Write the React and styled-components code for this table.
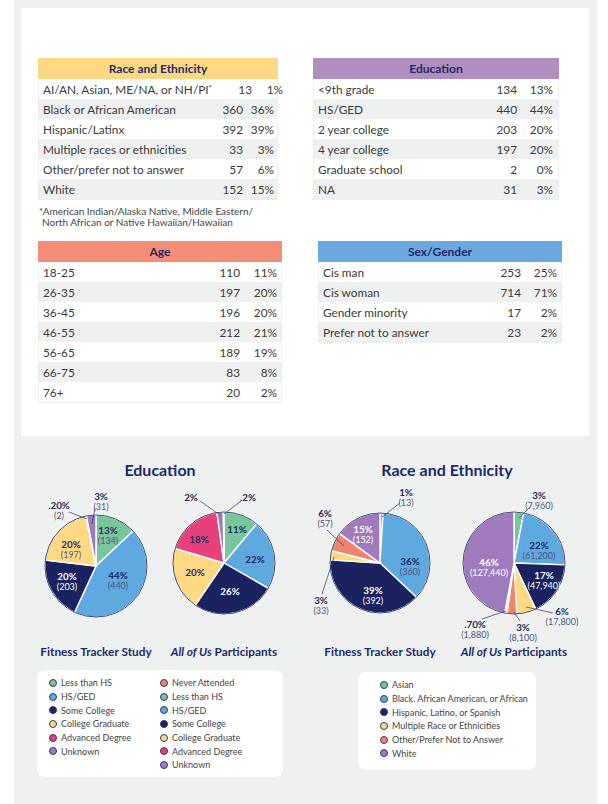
import React from "react";
import styled, { createGlobalStyle } from "styled-components";

const GlobalStyle = createGlobalStyle`
  body {
    margin: 0;
    background: #fff;
    font-family: "Lato", "Liberation Sans", sans-serif;
  }
`;

const colors = {
  green: "#78c69b",
  blue: "#5ea9df",
  navy: "#1a2260",
  yellow: "#fdd984",
  pink: "#e8407a",
  purple: "#9f7bbd",
  salmon: "#f2846c",
  sliver: "#e6e6e6",
};

const Panel = styled.div`
  box-sizing: border-box;
  width: 583px;
  min-height: 804px;
  margin-left: 14px;
  padding-top: 8px;
  background: #eff1f1;
`;

const Card = styled.section`
  background: #fff;
  margin: 0 8px 0 7px;
  padding: 50px 0 33px 17px;
`;

const TopGrid = styled.div`
  display: grid;
  grid-template-columns: 243px 248px;
  column-gap: 32px;
  row-gap: 13px;
  align-items: start;
`;

const Table = styled.div`
  width: ${(p) => p.$w}px;
  margin-left: ${(p) => p.$ml || 0}px;
`;

const Head = styled.div`
  background: ${(p) => p.$bg};
  height: 21px;
  line-height: 21px;
  text-align: center;
  font-size: 12px;
  font-weight: 700;
  color: #1e2a6a;
`;

const Body = styled.div`
  border: 1px solid #eeeeee;
  border-top: 0;
`;

const Row = styled.div`
  display: grid;
  grid-template-columns: 1fr 40px ${(p) => p.$pct}px;
  align-items: center;
  height: 20px;
  padding: 0 ${(p) => p.$pr}px 0 4px;
  background: ${(p) => (p.$alt ? "#eff0f0" : "#fff")};
  font-size: 11.8px;
  color: #3a3a3a;
  white-space: nowrap;
`;

const Num = styled.span`
  text-align: right;
`;

const Star = styled.span`
  font-size: 8px;
  vertical-align: 3px;
`;

const Footnote = styled.p`
  margin: 6px 0 0 1px;
  font-size: 10px;
  line-height: 11px;
  color: #444;
  span {
    display: block;
    padding-left: 3px;
  }
`;

const ChartsGrid = styled.div`
  display: grid;
  grid-template-columns: 260px 268px;
  column-gap: 23px;
  padding: 25px 0 0 16px;
`;

const ChartCol = styled.div`
  display: flex;
  flex-direction: column;
  align-items: center;
`;

const ChartTitle = styled.h2`
  margin: 0;
  font-size: 16px;
  line-height: 18px;
  font-weight: 700;
  color: #1b2a68;
`;

const PieRow = styled.div`
  display: flex;
  margin-top: 8px;
`;

const PieCell = styled.figure`
  margin: 0;
  width: ${(p) => p.$w}px;
  display: flex;
  flex-direction: column;
  align-items: center;
`;

const Caption = styled.figcaption`
  margin-top: 3px;
  font-size: 11.8px;
  line-height: 12px;
  font-weight: 700;
  color: #1b2a68;
  white-space: nowrap;
`;

const Legend = styled.div`
  display: grid;
  grid-template-columns: ${(p) => p.$cols};
  align-items: start;
  box-sizing: border-box;
  width: ${(p) => p.$w}px;
  margin-top: ${(p) => p.$mt}px;
  padding: ${(p) => p.$pad};
  background: #fff;
  border-radius: 8px;
`;

const LegendItem = styled.div`
  display: flex;
  align-items: center;
  gap: 4px;
  height: 13.7px;
  font-size: 9px;
  color: #444;
  white-space: nowrap;
`;

const Dot = styled.span`
  box-sizing: border-box;
  width: 8px;
  height: 8px;
  border-radius: 50%;
  background: ${(p) => p.$c};
  border: 1px solid #33386a;
  flex: none;
`;

const raceRows = [
  ["AI/AN, Asian, ME/NA, or NH/PI", "13", "1%", true],
  ["Black or African American", "360", "36%"],
  ["Hispanic/Latinx", "392", "39%"],
  ["Multiple races or ethnicities", "33", "3%"],
  ["Other/prefer not to answer", "57", "6%"],
  ["White", "152", "15%"],
];

const eduRows = [
  ["<9th grade", "134", "13%"],
  ["HS/GED", "440", "44%"],
  ["2 year college", "203", "20%"],
  ["4 year college", "197", "20%"],
  ["Graduate school", "2", "0%"],
  ["NA", "31", "3%"],
];

const ageRows = [
  ["18-25", "110", "11%"],
  ["26-35", "197", "20%"],
  ["36-45", "196", "20%"],
  ["46-55", "212", "21%"],
  ["56-65", "189", "19%"],
  ["66-75", "83", "8%"],
  ["76+", "20", "2%"],
];

const sexRows = [
  ["Cis man", "253", "25%"],
  ["Cis woman", "714", "71%"],
  ["Gender minority", "17", "2%"],
  ["Prefer not to answer", "23", "2%"],
];

const DataTable = ({ title, bg, rows, w, ml, pct, pr }) => (
  <Table $w={w} $ml={ml}>
    <Head $bg={bg}>{title}</Head>
    <Body>
      {rows.map(([label, n, p, star], i) => (
        <Row key={label} $alt={i % 2 === 1} $pct={pct} $pr={pr}>
          <span>
            {label}
            {star && <Star>*</Star>}
          </span>
          <Num>{n}</Num>
          <Num>{p}</Num>
        </Row>
      ))}
    </Body>
  </Table>
);

const pt = (r, a) => [r * Math.sin((a * Math.PI) / 180), -r * Math.cos((a * Math.PI) / 180)];

const slicePath = (r, a0, a1) => {
  const [x0, y0] = pt(r, a0);
  const [x1, y1] = pt(r, a1);
  const large = a1 - a0 > 180 ? 1 : 0;
  return `M0 0 L${x0} ${y0} A${r} ${r} 0 ${large} 1 ${x1} ${y1} Z`;
};

const Pie = ({ w, dy, r, slices, labels }) => {
  const total = slices.reduce((s, x) => s + x.v, 0);
  let acc = 0;
  return (
    <svg width={w} height="156" viewBox={`${-w / 2} -76 ${w} 156`}>
      <g transform={`translate(0 ${dy})`}>
        {slices.map((s, i) => {
          const a0 = (acc / total) * 360;
          acc += s.v;
          const a1 = (acc / total) * 360;
          return (
            <path key={i} d={slicePath(r, a0, a1)} fill={s.c} stroke="#fff" strokeWidth="1.4" strokeLinejoin="round" />
          );
        })}
        <circle r={r} fill="none" stroke="#2f3366" strokeWidth="0.9" />
        {labels.map((l, i) => (
          <g key={i} textAnchor="middle" dominantBaseline="central">
            {l.line && (
              <line x1={l.line[0]} y1={l.line[1]} x2={l.line[2]} y2={l.line[3]} stroke="#2f3366" strokeWidth="0.7" />
            )}
            <text x={l.x} y={l.y} fontSize="9.8" fontWeight="700" fill={l.light ? "#fff" : "#1f2a60"}>
              {l.p}
            </text>
            {l.n && (
              <text x={l.x} y={l.y + 10} fontSize="9" fill={l.light ? "#fff" : "#50567a"}>
                {l.n}
              </text>
            )}
          </g>
        ))}
      </g>
    </svg>
  );
};

const ftsEdu = {
  dy: 3,
  r: 51,
  slices: [
    { v: 13, c: colors.green },
    { v: 44, c: colors.blue },
    { v: 20, c: colors.navy },
    { v: 20, c: colors.yellow },
    { v: 0.2, c: colors.pink },
    { v: 3, c: colors.purple },
  ],
  labels: [
    { x: 12, y: -36, p: "13%", n: "(134)" },
    { x: 22, y: 9, p: "44%", n: "(440)" },
    { x: -29, y: 10, p: "20%", n: "(203)", light: true },
    { x: -25, y: -22, p: "20%", n: "(197)" },
    { x: -37, y: -61, p: ".20%", n: "(2)", line: [-27, -54, -9, -47] },
    { x: 5, y: -70, p: "3%", n: "(31)", line: [-1, -58, -4, -42] },
  ],
};

const aouEdu = {
  dy: 0,
  r: 51,
  slices: [
    { v: 11, c: colors.green },
    { v: 22, c: colors.blue },
    { v: 26, c: colors.navy },
    { v: 20, c: colors.yellow },
    { v: 18, c: colors.pink },
    { v: 2, c: colors.purple },
    { v: 0.2, c: colors.salmon },
  ],
  labels: [
    { x: 13, y: -34, p: "11%" },
    { x: 31, y: -4, p: "22%" },
    { x: 6, y: 28, p: "26%", light: true },
    { x: -29, y: 9, p: "20%" },
    { x: -25, y: -24, p: "18%" },
    { x: -33, y: -66, p: "2%", line: [-24, -62, -4, -48] },
    { x: 24, y: -66, p: ".2%", line: [17, -62, 0, -49] },
  ],
};

const ftsRace = {
  dy: 0,
  r: 50,
  slices: [
    { v: 1, c: colors.green },
    { v: 36, c: colors.blue },
    { v: 39, c: colors.navy },
    { v: 3, c: colors.yellow },
    { v: 6, c: colors.salmon },
    { v: 15, c: colors.purple },
  ],
  labels: [
    { x: 26, y: -71, p: "1%", n: "(13)", line: [20, -60, 2, -46] },
    { x: 30, y: -2, p: "36%", n: "(360)" },
    { x: -7, y: 27, p: "39%", n: "(392)", light: true },
    { x: -17, y: -34, p: "15%", n: "(152)", light: true },
    { x: -55, y: -50, p: "6%", n: "(57)", line: [-53, -33, -36, -17] },
    { x: -59, y: 37, p: "3%", n: "(33)", line: [-58, 31, -46, -6] },
  ],
};

const aouRace = {
  dy: 0,
  r: 51,
  slices: [
    { v: 3, c: colors.green },
    { v: 22, c: colors.blue },
    { v: 17, c: colors.navy },
    { v: 6, c: colors.yellow },
    { v: 3, c: colors.salmon },
    { v: 0.7, c: colors.sliver },
    { v: 46, c: colors.purple },
  ],
  labels: [
    { x: 25, y: -68, p: "3%", n: "(7,960)", line: [16, -56, 5, -45] },
    { x: 25, y: -18, p: "22%", n: "(61,200)" },
    { x: 30, y: 12, p: "17%", n: "(47,940)", light: true },
    { x: -25, y: -1, p: "46%", n: "(127,440)", light: true },
    { x: 48, y: 48, p: "6%", n: "(17,800)", line: [39, 50, 12, 44] },
    { x: 9, y: 64, p: "3%", n: "(8,100)", line: [6, 58, 0, 49] },
    { x: -39, y: 61, p: ".70%", n: "(1,880)", line: [-32, 56, -8, 48] },
  ],
};

const eduLegendA = [
  ["Less than HS", colors.green],
  ["HS/GED", colors.blue],
  ["Some College", colors.navy],
  ["College Graduate", colors.yellow],
  ["Advanced Degree", colors.pink],
  ["Unknown", colors.purple],
];

const eduLegendB = [["Never Attended", colors.salmon], ...eduLegendA];

const raceLegend = [
  ["Asian", colors.green],
  ["Black. African American, or African", colors.blue],
  ["Hispanic, Latino, or Spanish", colors.navy],
  ["Multiple Race or Ethnicities", colors.yellow],
  ["Other/Prefer Not to Answer", colors.salmon],
  ["White", colors.purple],
];

const LegendList = ({ items }) => (
  <div>
    {items.map(([label, c]) => (
      <LegendItem key={label}>
        <Dot $c={c} />
        {label}
      </LegendItem>
    ))}
  </div>
);

const AllOfUs = () => (
  <>
    <i>All of Us</i> Participants
  </>
);

export default function App() {
  return (
    <>
      <GlobalStyle />
      <Panel>
        <Card>
          <TopGrid>
            <div>
              <DataTable title="Race and Ethnicity" bg="#fdd882" rows={raceRows} w={240} pct={31} pr={3} />
              <Footnote>
                *American Indian/Alaska Native, Middle Eastern/
                <span>North African or Native Hawaiian/Hawaiian</span>
              </Footnote>
            </div>
            <DataTable title="Education" bg="#b08fc0" rows={eduRows} w={246} pct={36} pr={5} />
            <DataTable title="Age" bg="#f58e78" rows={ageRows} w={244} pct={37} pr={4} />
            <DataTable title="Sex/Gender" bg="#6aa8df" rows={sexRows} w={244} ml={5} pct={36} pr={4} />
          </TopGrid>
        </Card>

        <ChartsGrid>
          <ChartCol>
            <ChartTitle>Education</ChartTitle>
            <PieRow>
              <PieCell $w={128}>
                <Pie w={128} {...ftsEdu} />
                <Caption>Fitness Tracker Study</Caption>
              </PieCell>
              <PieCell $w={128}>
                <Pie w={128} {...aouEdu} />
                <Caption>
                  <AllOfUs />
                </Caption>
              </PieCell>
            </PieRow>
            <Legend $w={246} $mt={12} $cols="111px 1fr" $pad="6px 0 5px 12px">
              <LegendList items={eduLegendA} />
              <LegendList items={eduLegendB} />
            </Legend>
          </ChartCol>

          <ChartCol>
            <ChartTitle>Race and Ethnicity</ChartTitle>
            <PieRow>
              <PieCell $w={134}>
                <Pie w={134} {...ftsRace} />
                <Caption>Fitness Tracker Study</Caption>
              </PieCell>
              <PieCell $w={134}>
                <Pie w={134} {...aouRace} />
                <Caption>
                  <AllOfUs />
                </Caption>
              </PieCell>
            </PieRow>
            <Legend $w={178} $mt={14} $cols="1fr" $pad="6px 0 10px 22px">
              <LegendList items={raceLegend} />
            </Legend>
          </ChartCol>
        </ChartsGrid>
      </Panel>
    </>
  );
}
